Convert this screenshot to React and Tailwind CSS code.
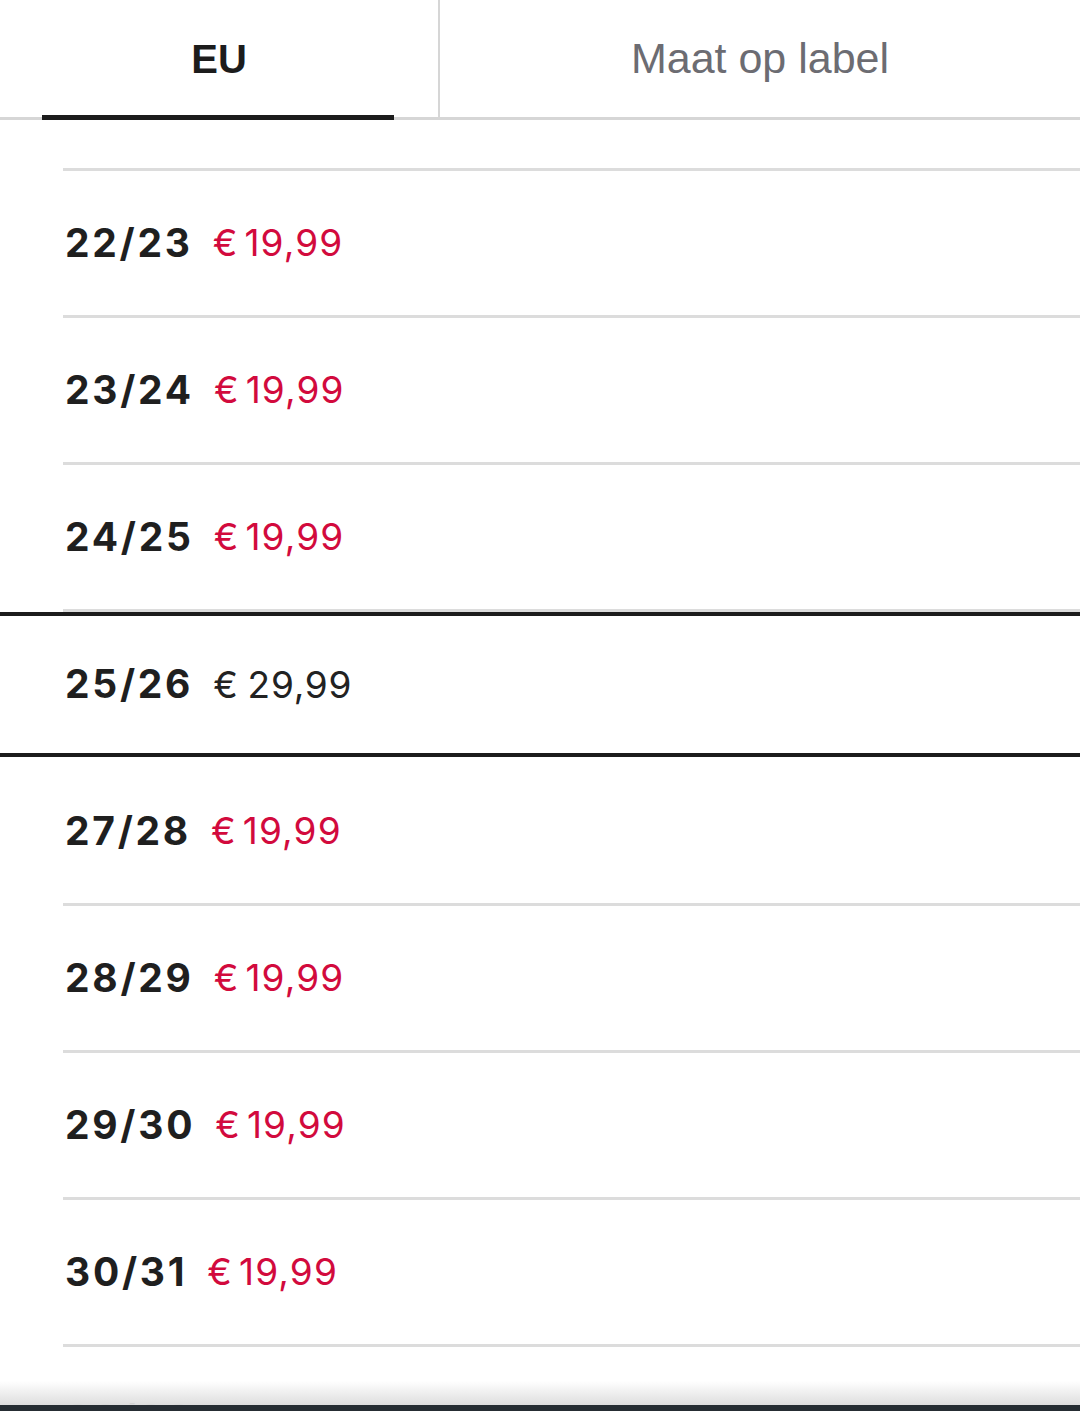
import { useState } from "react";

const sizes = [
  { label: "22/23", price: "19,99", sale: true },
  { label: "23/24", price: "19,99", sale: true },
  { label: "24/25", price: "19,99", sale: true },
  { label: "25/26", price: "29,99", sale: false },
  { label: "27/28", price: "19,99", sale: true },
  { label: "28/29", price: "19,99", sale: true },
  { label: "29/30", price: "19,99", sale: true },
  { label: "30/31", price: "19,99", sale: true },
  { label: "32/33", price: "19,99", sale: true },
];

const SizeRow = ({ item, selected, onSelect }) => {
  const label = (
    <span className="text-[39px] font-bold tracking-[0.07em] text-[#1f1f1f]">{item.label}</span>
  );

  if (selected) {
    return (
      <div>
        <button
          type="button"
          onClick={onSelect}
          className="flex h-[145px] w-full items-center border-y-4 border-[#1c1c1c] pl-[65px] text-left"
        >
          {label}
          <span className="ml-[20px] text-[37px] tracking-[0.02em] text-[#222]">
            €<span className="ml-[9px]">{item.price}</span>
          </span>
        </button>
        <div className="h-[2px]" />
      </div>
    );
  }

  return (
    <div>
      <button
        type="button"
        onClick={onSelect}
        className="flex h-[144px] w-full items-center pl-[65px] text-left"
      >
        {label}
        <span className="ml-[20px] text-[37px] tracking-[0.03em] text-[#d20a3d]">
          €<span className="ml-[6px]">{item.price}</span>
        </span>
      </button>
      <div className="ml-[63px] h-[3px] bg-[#dcdcdc]" />
    </div>
  );
};

export default function App() {
  const [tab, setTab] = useState("eu");
  const [selected, setSelected] = useState("25/26");

  return (
    <div className="relative h-[1411px] w-[1080px] overflow-hidden bg-white">
      {/* tabs */}
      <div className="flex h-[120px] border-b-[3px] border-[#d6d6d6] font-['Liberation_Sans',Arial,sans-serif]">
        <button
          type="button"
          onClick={() => setTab("eu")}
          className="relative flex w-[438px] items-center justify-center text-[40px] font-bold text-[#1c1c1c]"
        >
          EU
          {tab === "eu" && (
            <span className="absolute bottom-[-3px] left-[42px] right-[44px] h-[5px] bg-[#1c1c1c]" />
          )}
        </button>
        <div className="w-[2px] bg-[#d6d6d6]" />
        <button
          type="button"
          onClick={() => setTab("label")}
          className="flex flex-1 items-center justify-center text-[43px] text-[#6c6c72]"
        >
          Maat op label
        </button>
      </div>

      {/* size list, scrolled a little */}
      <div className="font-['Inter','Liberation_Sans',sans-serif]">
        <div className="h-[48px]" />
        <div className="ml-[63px] h-[3px] bg-[#dcdcdc]" />
        {sizes.map((item) => (
          <SizeRow
            key={item.label}
            item={item}
            selected={selected === item.label}
            onSelect={() => setSelected(item.label)}
          />
        ))}
      </div>

      {/* bottom fade + bar */}
      <div className="absolute bottom-[6px] left-0 right-0 h-[24px] bg-gradient-to-b from-white/0 to-[#dedede]" />
      <div className="absolute bottom-0 left-0 right-0 h-[6px] bg-[#262d33]" />
    </div>
  );
}
